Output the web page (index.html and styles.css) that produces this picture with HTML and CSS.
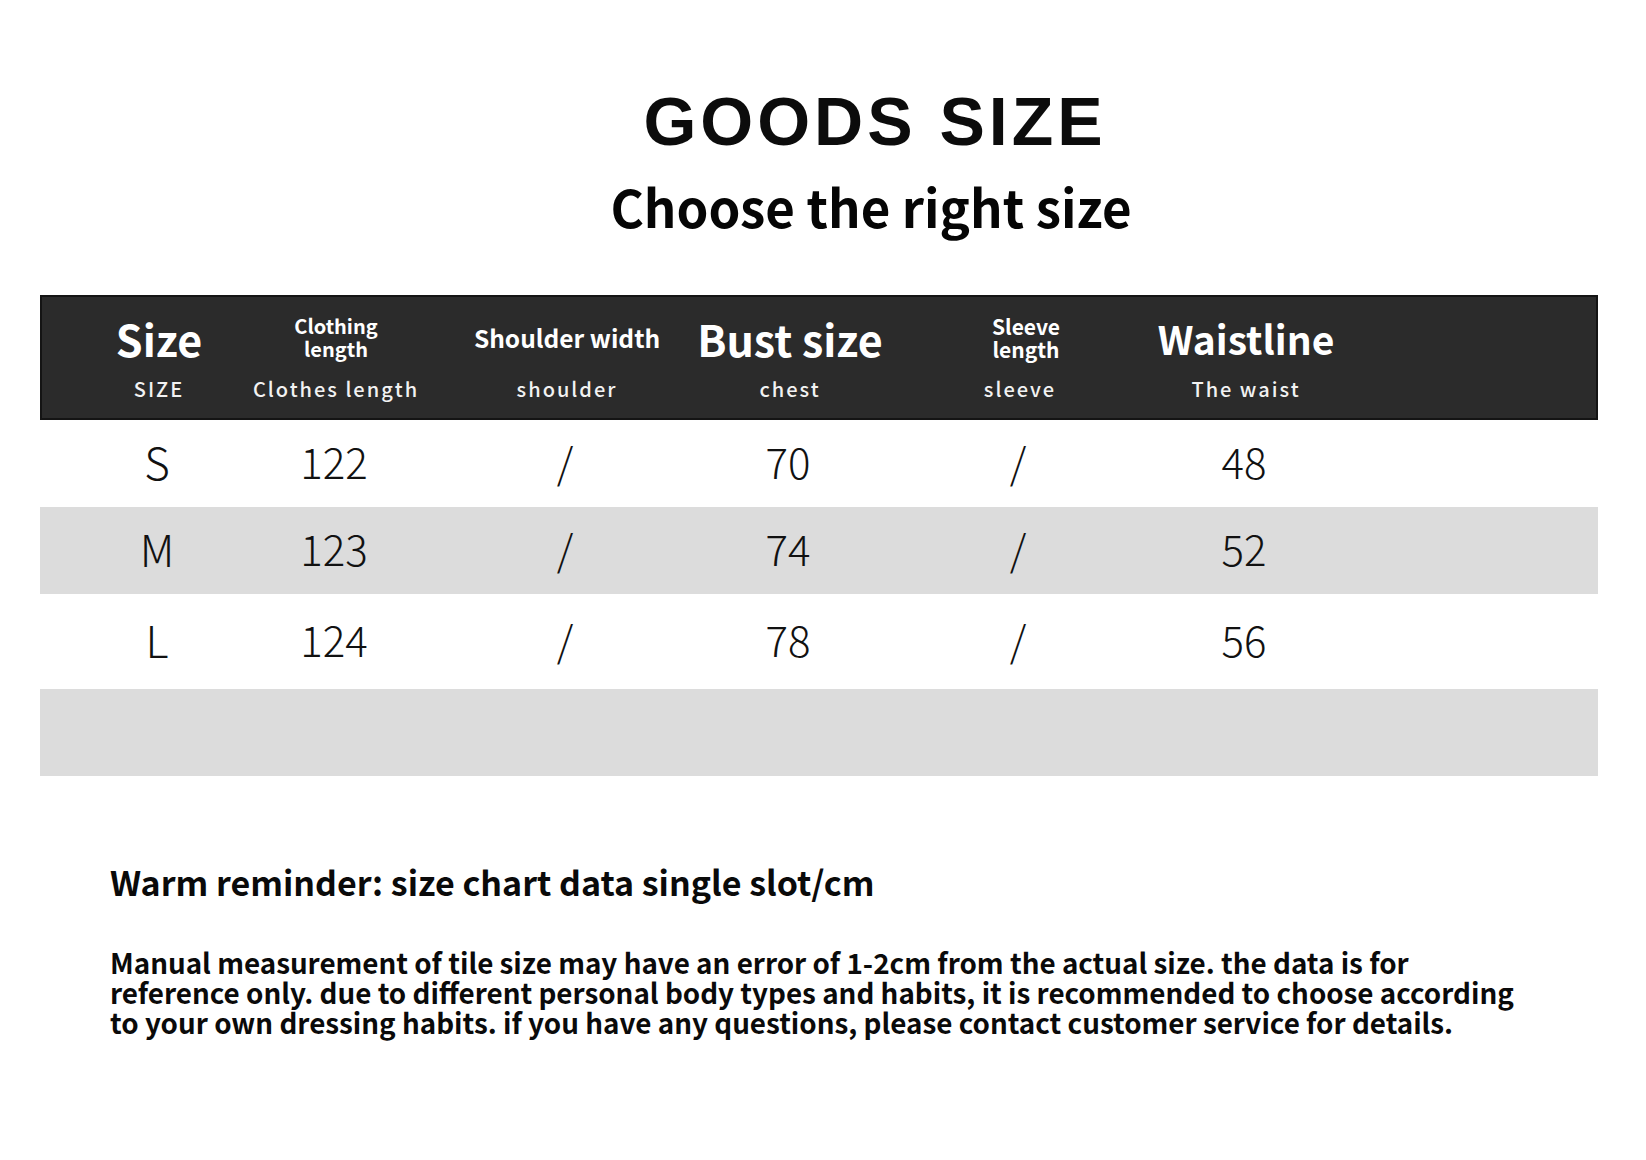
FILE: index.html
```html
<!DOCTYPE html>
<html lang="en">
<head>
<meta charset="utf-8">
<title>Goods Size</title>
<link rel="stylesheet" href="styles.css">
</head>
<body>
<div class="page">
  <header class="titles">
    <h1 class="title">GOODS SIZE</h1>
    <h2 class="subtitle">Choose the right size</h2>
  </header>

  <section class="chart">
    <div class="head">
      <div class="hcell c1"><div class="htop"><span class="big">Size</span></div><div class="hsub">SIZE</div></div>
      <div class="hcell c2"><div class="htop"><span class="small">Clothing<br>length</span></div><div class="hsub">Clothes length</div></div>
      <div class="hcell c3"><div class="htop"><span class="mid">Shoulder width</span></div><div class="hsub">shoulder</div></div>
      <div class="hcell c4"><div class="htop"><span class="big">Bust size</span></div><div class="hsub">chest</div></div>
      <div class="hcell c5"><div class="htop"><span class="small sleeve">Sleeve<br>length</span></div><div class="hsub">sleeve</div></div>
      <div class="hcell c6"><div class="htop"><span class="big waist">Waistline</span></div><div class="hsub">The waist</div></div>
    </div>

    <div class="row">
      <div class="cell c1">S</div><div class="cell c2">122</div><div class="cell c3">/</div><div class="cell c4">70</div><div class="cell c5">/</div><div class="cell c6">48</div>
    </div>
    <div class="row gray">
      <div class="cell c1">M</div><div class="cell c2">123</div><div class="cell c3">/</div><div class="cell c4">74</div><div class="cell c5">/</div><div class="cell c6">52</div>
    </div>
    <div class="row tall">
      <div class="cell c1">L</div><div class="cell c2">124</div><div class="cell c3">/</div><div class="cell c4">78</div><div class="cell c5">/</div><div class="cell c6">56</div>
    </div>
    <div class="row gray"></div>
  </section>

  <section class="notes">
    <p class="reminder">Warm reminder: size chart data single slot/cm</p>
    <p class="detail">Manual measurement of tile size may have an error of 1-2cm from the actual size. the data is for<br>reference only. due to different personal body types and habits, it is recommended to choose according<br>to your own dressing habits. if you have any questions, please contact customer service for details.</p>
  </section>
</div>
</body>
</html>
```

FILE: styles.css
```css
* { box-sizing: border-box; }
html, body { margin: 0; padding: 0; background: #ffffff; }
body { font-family: "Noto Sans CJK SC", "Noto Sans", sans-serif; color: #111; }

.page { width: 1646px; height: 1160px; padding-top: 85px; }

.titles { display: flex; flex-direction: column; align-items: center; padding-left: 96px; }
.title {
  margin: 0 0 0 8px; font-family: "Liberation Sans", Arial, sans-serif; font-weight: 700;
  font-size: 68px; line-height: 72px; letter-spacing: 4px; color: #0c0c0c;
}
.subtitle {
  margin: 20px 0 0; font-weight: 700; font-size: 51px; line-height: 59px; color: #050505;
}

.chart { margin: 59px 48px 0 40px; width: 1558px; }

.head {
  display: grid; grid-template-columns: 44px 146px 208px 254px 192px 268px 184px;
  height: 125px; background: #2b2b2b; border: 2px solid #141414; color: #fff;
  padding-top: 8px;
}
.head .c1 { grid-column: 2; }
.hcell { display: flex; flex-direction: column; align-items: center; }
.htop { height: 66px; display: flex; align-items: center; justify-content: center; text-align: center; white-space: nowrap; }
.big { font-weight: 700; font-size: 43px; line-height: 46px; }
.big.waist { font-size: 39px; }
.small { font-weight: 700; font-size: 20px; line-height: 23px; margin-bottom: 3px; }
.small.sleeve { font-size: 21px; position: relative; left: 6px; margin-bottom: 1px; }
.mid { font-weight: 700; font-size: 24.5px; margin-bottom: 2px; }
.hsub { margin-top: 6px; font-size: 20px; line-height: 24px; letter-spacing: 2px; font-weight: 500; color: #f2f2f2; white-space: nowrap; }

.row {
  display: grid; grid-template-columns: 44px 146px 208px 254px 192px 268px 184px;
  height: 87px; align-items: center;
}
.row .c1 { grid-column: 2; }
.row.tall { height: 95px; }
.row.gray { background: #dcdcdc; }
.cell { text-align: center; font-size: 42px; font-weight: 300; color: #111; padding-bottom: 6px; }
.row .c1 { font-size: 44px; }

.notes { padding: 86px 0 0 110px; }
.reminder { margin: 0; font-weight: 700; font-size: 34px; line-height: 40px; color: #0a0a0a; }
.detail { margin: 45px 0 0; font-weight: 700; font-size: 27.8px; line-height: 30px; color: #0a0a0a; }
```
